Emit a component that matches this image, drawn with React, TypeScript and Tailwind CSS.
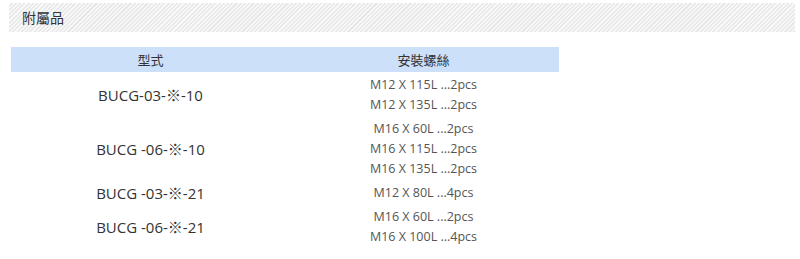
import React from "react";

const rows: { model: string; screws: string[] }[] = [
  { model: "BUCG-03-※-10", screws: ["M12 X 115L ...2pcs", "M12 X 135L ...2pcs"] },
  { model: "BUCG -06-※-10", screws: ["M16 X 60L ...2pcs", "M16 X 115L ...2pcs", "M16 X 135L ...2pcs"] },
  { model: "BUCG -03-※-21", screws: ["M12 X 80L ...4pcs"] },
  { model: "BUCG -06-※-21", screws: ["M16 X 60L ...2pcs", "M16 X 100L ...4pcs"] },
];

export default function App() {
  return (
    <div
      className="w-[800px] h-[259px] bg-white pt-[3px]"
      style={{ fontFamily: '"Open Sans", "Noto Sans CJK TC", sans-serif' }}
    >
      <div className="ml-[9px] w-[786px] h-[29px] flex items-center pl-[13px] bg-[repeating-linear-gradient(135deg,#f8f8f8_0px,#f8f8f8_1.5px,#e8e8e8_1.5px,#e8e8e8_3px)]">
        <span className="text-[14px] text-[#333] font-['Noto_Sans_CJK_TC',sans-serif]">附屬品</span>
      </div>
      <div className="ml-[11px] mt-[15px] w-[548px]">
        <div className="flex h-[25px] items-center bg-[#cde0fa] text-[13px] text-[#333] font-['Noto_Sans_CJK_TC',sans-serif]">
          <div className="w-[277px] pl-[2px] text-center">型式</div>
          <div className="flex-1 text-center">安裝螺絲</div>
        </div>
        <div className="pt-[1px]">
          {rows.map((r, i) => (
            <div key={i} className="flex items-center py-[2px]">
              <div className="w-[277px] pl-[2px] text-center text-[15px] leading-[20px] text-[#333]">{r.model}</div>
              <div className="flex-1 flex flex-col items-center text-[12.5px] text-[#555]">
                {r.screws.map((s, j) => (
                  <div key={j} className="leading-[20px]">{s}</div>
                ))}
              </div>
            </div>
          ))}
        </div>
      </div>
    </div>
  );
}
